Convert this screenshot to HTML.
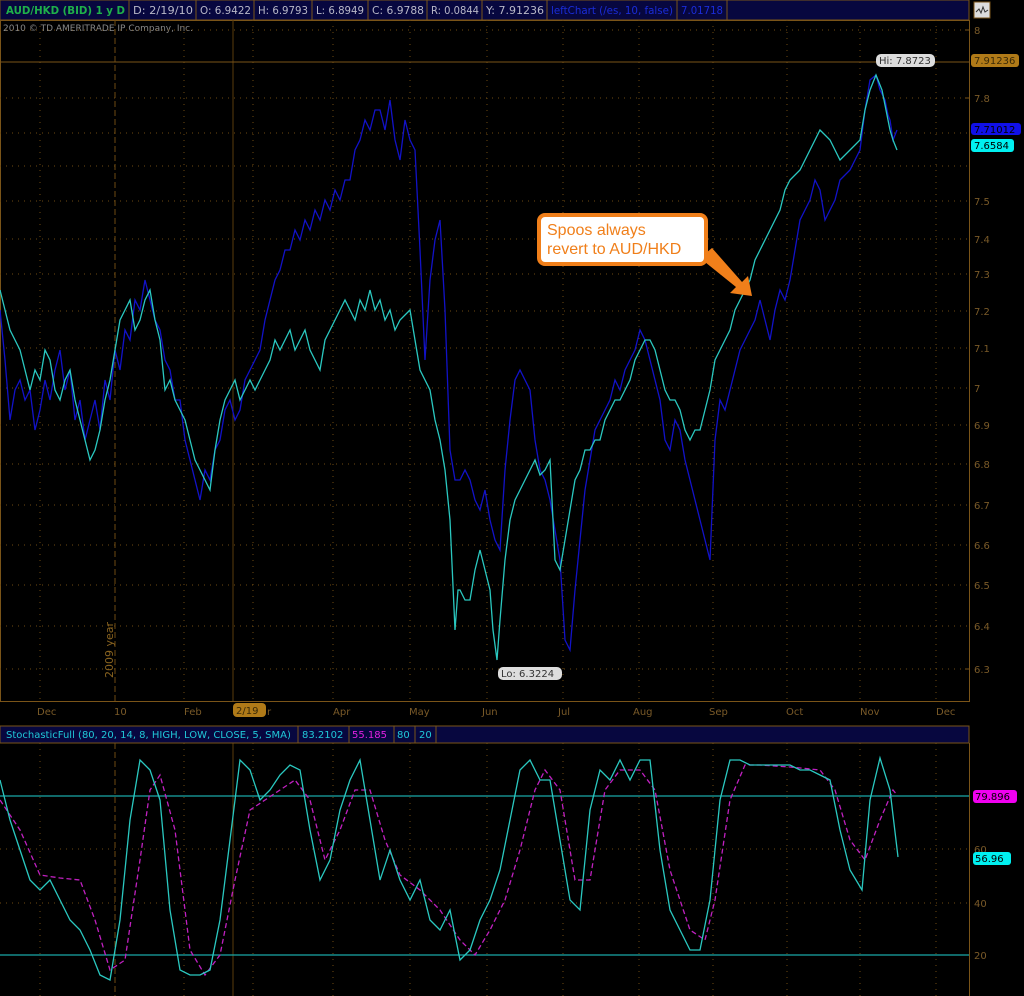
<!DOCTYPE html>
<html><head><meta charset="utf-8"><style>
html,body{margin:0;padding:0;background:#000;width:1024px;height:996px;overflow:hidden}
svg{display:block}
text{font-family:"DejaVu Sans","Liberation Sans",sans-serif}
text.ann{font-family:"Liberation Sans",sans-serif}
</style></head><body>
<svg width="1024" height="996" viewBox="0 0 1024 996" xmlns="http://www.w3.org/2000/svg">
<rect width="1024" height="996" fill="#000"/>
<rect x="0" y="0" width="969" height="20" fill="#07073f" stroke="#7a5418" stroke-width="1"/>
<g stroke="#7a5418" stroke-width="1">
<line x1="129" y1="0" x2="129" y2="20"/><line x1="196" y1="0" x2="196" y2="20"/>
<line x1="254" y1="0" x2="254" y2="20"/><line x1="312" y1="0" x2="312" y2="20"/>
<line x1="368" y1="0" x2="368" y2="20"/><line x1="427" y1="0" x2="427" y2="20"/>
<line x1="482" y1="0" x2="482" y2="20"/><line x1="547" y1="0" x2="547" y2="20"/>
<line x1="677" y1="0" x2="677" y2="20"/><line x1="727" y1="0" x2="727" y2="20"/>
</g>
<g font-size="10.5">
<text x="6" y="14" fill="#1fb04a" font-weight="bold" textLength="119" lengthAdjust="spacingAndGlyphs">AUD/HKD (BID) 1 y D</text>
<text x="133" y="14" fill="#b8b8c8" textLength="60" lengthAdjust="spacingAndGlyphs">D: 2/19/10</text>
<text x="200" y="14" fill="#b8b8c8" textLength="51" lengthAdjust="spacingAndGlyphs">O: 6.9422</text>
<text x="258" y="14" fill="#b8b8c8" textLength="50" lengthAdjust="spacingAndGlyphs">H: 6.9793</text>
<text x="316" y="14" fill="#b8b8c8" textLength="48" lengthAdjust="spacingAndGlyphs">L: 6.8949</text>
<text x="372" y="14" fill="#b8b8c8" textLength="52" lengthAdjust="spacingAndGlyphs">C: 6.9788</text>
<text x="431" y="14" fill="#b8b8c8" textLength="48" lengthAdjust="spacingAndGlyphs">R: 0.0844</text>
<text x="486" y="14" fill="#b8b8c8" textLength="58" lengthAdjust="spacingAndGlyphs">Y: 7.91236</text>
<text x="551" y="14" fill="#1a2cd8" textLength="122" lengthAdjust="spacingAndGlyphs">leftChart (/es, 10, false)</text>
<text x="681" y="14" fill="#1a2cd8" textLength="42" lengthAdjust="spacingAndGlyphs">7.01718</text>
</g>
<rect x="974" y="2" width="16" height="16" fill="#ddd" stroke="#7a5418"/>
<polyline points="976,12 979,9 981,13 983,7 985,12 988,10" fill="none" stroke="#333" stroke-width="1"/>
<text x="3" y="31" font-size="9" fill="#888" textLength="190" lengthAdjust="spacingAndGlyphs">2010 © TD AMERITRADE IP Company, Inc.</text>
<rect x="0.5" y="20.5" width="969" height="681" fill="none" stroke="#7a5418"/>
<g stroke="#6e4a12" stroke-width="1" stroke-dasharray="1,5">
<line x1="0" y1="30" x2="969" y2="30"/><line x1="0" y1="98" x2="969" y2="98"/>
<line x1="0" y1="133" x2="969" y2="133"/><line x1="0" y1="166" x2="969" y2="166"/>
<line x1="0" y1="201" x2="969" y2="201"/><line x1="0" y1="239" x2="969" y2="239"/>
<line x1="0" y1="274" x2="969" y2="274"/><line x1="0" y1="311" x2="969" y2="311"/>
<line x1="0" y1="348" x2="969" y2="348"/><line x1="0" y1="388" x2="969" y2="388"/>
<line x1="0" y1="425" x2="969" y2="425"/><line x1="0" y1="464" x2="969" y2="464"/>
<line x1="0" y1="505" x2="969" y2="505"/><line x1="0" y1="545" x2="969" y2="545"/>
<line x1="0" y1="585" x2="969" y2="585"/><line x1="0" y1="626" x2="969" y2="626"/>
<line x1="0" y1="669" x2="969" y2="669"/>
<line x1="0" y1="849" x2="969" y2="849"/><line x1="0" y1="903" x2="969" y2="903"/>
</g>
<g stroke="#6e4a12" stroke-width="1" stroke-dasharray="1,5">
<line x1="40" y1="20" x2="40" y2="701"/><line x1="184" y1="20" x2="184" y2="701"/>
<line x1="253" y1="20" x2="253" y2="701"/><line x1="333" y1="20" x2="333" y2="701"/>
<line x1="410" y1="20" x2="410" y2="701"/><line x1="487" y1="20" x2="487" y2="701"/>
<line x1="563" y1="20" x2="563" y2="701"/><line x1="639" y1="20" x2="639" y2="701"/>
<line x1="713" y1="20" x2="713" y2="701"/><line x1="787" y1="20" x2="787" y2="701"/>
<line x1="860" y1="20" x2="860" y2="701"/><line x1="936" y1="20" x2="936" y2="701"/>
<line x1="40" y1="743" x2="40" y2="996"/><line x1="184" y1="743" x2="184" y2="996"/>
<line x1="253" y1="743" x2="253" y2="996"/><line x1="333" y1="743" x2="333" y2="996"/>
<line x1="410" y1="743" x2="410" y2="996"/><line x1="487" y1="743" x2="487" y2="996"/>
<line x1="563" y1="743" x2="563" y2="996"/><line x1="639" y1="743" x2="639" y2="996"/>
<line x1="713" y1="743" x2="713" y2="996"/><line x1="787" y1="743" x2="787" y2="996"/>
<line x1="860" y1="743" x2="860" y2="996"/><line x1="936" y1="743" x2="936" y2="996"/>
</g>
<line x1="115" y1="20" x2="115" y2="701" stroke="#6e4a12" stroke-dasharray="6,3"/>
<line x1="115" y1="743" x2="115" y2="996" stroke="#6e4a12" stroke-dasharray="6,3"/>
<line x1="233" y1="20" x2="233" y2="701" stroke="#5a3c0c"/>
<line x1="233" y1="743" x2="233" y2="996" stroke="#5a3c0c"/>
<line x1="0" y1="62" x2="969" y2="62" stroke="#7a5418"/>
<text transform="translate(113,678) rotate(-90)" font-size="11" fill="#8a6420">2009 year</text>
<g font-size="10" fill="#7a5a28">
<text x="974" y="34">8</text><text x="974" y="102">7.8</text>
<text x="974" y="205">7.5</text><text x="974" y="243">7.4</text><text x="974" y="278">7.3</text>
<text x="974" y="315">7.2</text><text x="974" y="352">7.1</text><text x="974" y="392">7</text>
<text x="974" y="429">6.9</text><text x="974" y="468">6.8</text><text x="974" y="509">6.7</text>
<text x="974" y="549">6.6</text><text x="974" y="589">6.5</text><text x="974" y="630">6.4</text>
<text x="974" y="673">6.3</text>
<text x="974" y="853">60</text><text x="974" y="907">40</text><text x="974" y="959">20</text>
</g>
<g stroke="#7a5418"><line x1="965" y1="30" x2="969" y2="30"/><line x1="965" y1="98" x2="969" y2="98"/><line x1="965" y1="669" x2="969" y2="669"/></g>
<g font-size="10" fill="#7a5a28">
<text x="37" y="715">Dec</text><text x="114" y="715">10</text><text x="184" y="715">Feb</text>
<text x="333" y="715">Apr</text><text x="409" y="715">May</text><text x="482" y="715">Jun</text>
<text x="558" y="715">Jul</text><text x="633" y="715">Aug</text><text x="709" y="715">Sep</text>
<text x="786" y="715">Oct</text><text x="860" y="715">Nov</text><text x="936" y="715">Dec</text>
</g>
<rect x="233" y="703" width="33" height="14" rx="4" fill="#b07a18"/>
<text x="236" y="714" font-size="10" fill="#3a2a08">2/19</text><text x="267" y="715" font-size="10" fill="#7a5a28">r</text>
<polyline fill="none" stroke="#1212c8" stroke-width="1.3" points="0,310 5,360 10,420 15,390 20,380 25,400 30,390 35,430 40,410 45,380 50,400 55,370 60,350 65,390 70,370 75,420 80,400 85,440 90,420 95,400 100,430 105,380 110,400 115,350 120,370 125,330 130,340 135,300 140,310 145,280 150,300 155,320 160,330 165,360 170,370 175,400 180,400 185,440 190,460 195,480 200,500 205,470 210,480 215,450 220,440 225,410 230,400 235,420 240,410 245,380 250,370 255,360 260,350 265,320 270,300 275,280 280,270 285,250 290,250 295,230 300,240 305,220 310,230 315,210 320,220 325,200 330,210 335,190 340,200 345,180 350,180 355,150 360,140 365,120 370,130 375,110 380,110 385,130 390,100 395,140 400,160 405,120 410,140 415,150 418,210 420,250 425,360 430,280 435,240 440,220 445,310 450,450 455,480 460,480 465,470 470,480 475,500 480,510 485,490 490,520 495,540 500,550 505,470 510,420 515,380 520,370 525,380 530,390 535,440 540,470 545,480 550,500 555,530 560,560 565,640 570,650 575,590 580,540 585,490 590,460 595,430 600,420 605,410 610,400 615,380 620,390 625,370 630,360 635,350 640,330 645,340 650,360 655,380 660,400 665,440 670,450 675,420 680,430 685,460 690,480 695,500 700,520 705,540 710,560 715,440 720,400 725,410 730,390 735,370 740,350 745,340 750,330 755,320 760,300 765,320 770,340 775,310 780,290 785,300 790,280 795,250 800,220 805,210 810,200 815,180 820,190 825,220 830,210 835,200 840,180 845,175 850,170 855,160 860,150 865,110 870,80 876,75 880,90 885,100 888,115 890,120 893,140 897,130"/>
<polyline fill="none" stroke="#2ac8c0" stroke-width="1.3" points="0,290 5,310 10,330 15,340 20,350 25,370 30,390 35,370 40,380 45,350 50,360 55,390 60,400 65,380 70,370 75,400 80,420 85,440 90,460 95,450 100,430 105,400 110,380 115,350 120,320 125,310 130,300 135,330 140,320 145,300 150,290 155,320 160,340 165,390 170,380 175,400 180,410 185,420 190,440 195,460 200,470 205,480 210,490 215,450 220,420 225,400 230,390 235,380 240,400 245,390 250,380 255,390 260,380 265,370 270,360 275,340 280,350 285,340 290,330 295,350 300,340 305,330 310,350 315,360 320,370 325,340 330,330 335,320 340,310 345,300 350,310 355,320 360,300 365,310 370,290 375,310 380,300 385,320 390,310 395,330 400,320 405,315 410,310 415,340 420,370 425,380 430,390 435,420 440,440 445,470 450,520 455,630 458,590 460,590 465,600 470,600 475,570 480,550 485,570 490,590 493,630 497,660 500,620 505,560 510,520 515,500 520,490 525,480 530,470 535,460 540,475 545,470 550,460 553,520 555,560 560,570 565,540 570,510 575,480 580,470 585,450 590,450 595,440 600,440 605,420 610,410 615,400 620,400 625,390 630,380 635,360 640,350 645,340 650,340 655,350 660,370 665,390 670,400 675,400 680,410 685,430 690,440 695,430 700,430 705,410 710,390 715,360 720,350 725,340 730,330 735,310 740,300 745,290 750,280 755,260 760,250 765,240 770,230 775,220 780,210 785,190 790,180 795,175 800,170 805,160 810,150 815,140 820,130 825,135 830,140 835,150 840,160 845,155 850,150 855,145 860,140 865,110 870,90 876,75 882,90 886,110 890,130 893,140 897,150"/>
<rect x="876" y="54" width="59" height="13" rx="5" fill="#ddd"/>
<text x="879" y="64" font-size="10" fill="#333">Hi: 7.8723</text>
<rect x="498" y="667" width="64" height="13" rx="5" fill="#ddd"/>
<text x="501" y="677" font-size="10" fill="#333">Lo: 6.3224</text>
<polygon points="700,258 712,248 742,282 748,276 752,296 730,293 736,287" fill="#f07f1a"/>
<rect x="539" y="215" width="167" height="49" rx="6" fill="#fff" stroke="#f07f1a" stroke-width="4"/>
<text class="ann" x="547" y="235" font-size="16" fill="#f07f1a">Spoos always</text>
<text class="ann" x="547" y="254" font-size="16" fill="#f07f1a">revert to AUD/HKD</text>
<rect x="971" y="54" width="48" height="13" rx="3" fill="#b07a18"/>
<text x="974" y="64" font-size="10" fill="#3a2a08">7.91236</text>
<rect x="971" y="123" width="50" height="12" rx="3" fill="#1010e8"/>
<text x="974" y="133" font-size="10" fill="#000">7.71012</text>
<rect x="971" y="139" width="43" height="13" rx="3" fill="#00f0f0"/>
<text x="974" y="149" font-size="10" fill="#000">7.6584</text>
<rect x="0" y="726" width="969" height="17" fill="#07073f" stroke="#7a5418"/>
<g stroke="#7a5418"><line x1="298" y1="726" x2="298" y2="743"/><line x1="349" y1="726" x2="349" y2="743"/><line x1="394" y1="726" x2="394" y2="743"/><line x1="415" y1="726" x2="415" y2="743"/><line x1="436" y1="726" x2="436" y2="743"/></g>
<g font-size="10">
<text x="6" y="738" fill="#20c8d8">StochasticFull (80, 20, 14, 8, HIGH, LOW, CLOSE, 5, SMA)</text>
<text x="302" y="738" fill="#20c8d8">83.2102</text>
<text x="352" y="738" fill="#e020e0">55.185</text>
<text x="397" y="738" fill="#20c8d8">80</text>
<text x="419" y="738" fill="#20c8d8">20</text>
</g>
<line x1="969.5" y1="743" x2="969.5" y2="996" stroke="#7a5418"/>
<line x1="0" y1="796" x2="969" y2="796" stroke="#1aa8a8" stroke-width="1.3"/>
<line x1="0" y1="955" x2="969" y2="955" stroke="#1aa8a8" stroke-width="1.3"/>
<polyline fill="none" stroke="#c020c0" stroke-width="1.3" stroke-dasharray="5,3" points="0,800 20,830 40,875 60,878 80,880 95,920 110,970 125,960 140,860 150,790 160,775 175,830 190,950 205,975 220,955 235,880 250,810 265,800 280,790 295,780 310,800 325,860 340,830 355,790 370,790 385,840 400,875 420,890 440,910 460,940 475,955 490,930 505,900 520,850 535,790 545,770 560,790 575,880 590,880 605,790 620,770 640,770 655,790 670,870 690,930 705,940 715,900 730,800 745,765 760,765 790,767 820,770 835,790 850,840 865,860 880,820 893,790 897,795"/>
<polyline fill="none" stroke="#2ac8c0" stroke-width="1.3" points="0,780 10,820 20,850 30,880 40,890 50,880 60,900 70,920 80,930 90,950 100,975 110,980 120,920 130,820 140,760 150,770 160,800 170,910 180,970 190,975 200,975 210,970 220,920 230,840 240,760 250,770 260,800 270,790 280,775 290,765 300,770 310,830 320,880 330,860 340,810 350,780 360,760 370,820 380,880 390,850 400,880 410,900 420,880 430,920 440,930 450,910 460,960 470,950 480,920 490,900 500,870 510,820 520,770 530,760 540,780 550,780 560,840 570,900 580,910 590,810 600,770 610,780 620,760 630,780 640,760 650,760 660,850 670,910 680,930 690,950 700,950 710,900 720,800 730,760 740,760 750,765 760,765 770,765 780,765 790,765 800,770 810,770 820,775 830,780 840,830 850,870 862,890 870,800 880,758 890,790 898,857"/>
<rect x="973" y="790" width="44" height="13" rx="3" fill="#f000f0"/>
<text x="975" y="800" font-size="10" fill="#000">79.896</text>
<rect x="973" y="852" width="38" height="13" rx="3" fill="#00f0f0"/>
<text x="975" y="862" font-size="10" fill="#000">56.96</text>
</svg>
</body></html>
